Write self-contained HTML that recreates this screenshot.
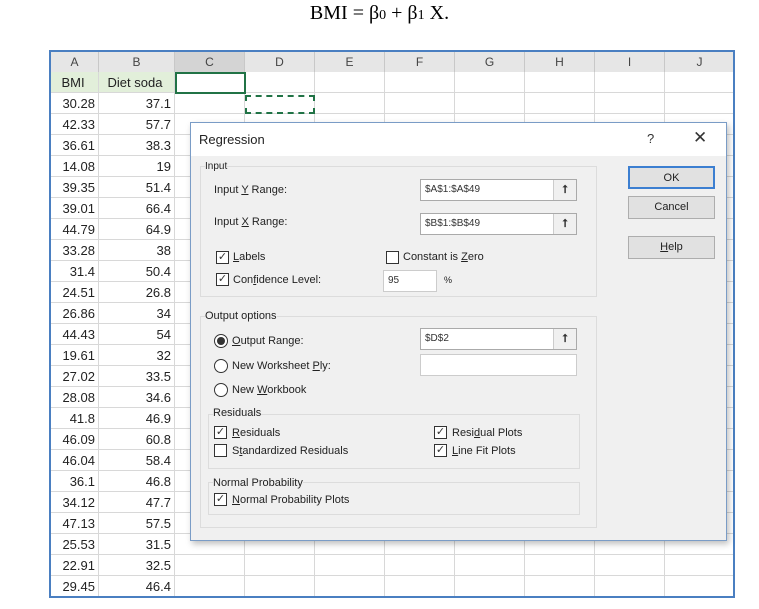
<!DOCTYPE html><html><head><style>
body{margin:0;width:759px;height:609px;background:#fff;position:relative;overflow:hidden;font-family:"Liberation Sans",sans-serif;}
.a{position:absolute;}
.t{font-size:12px;color:#222;}
.hd{position:absolute;top:52px;height:20px;background:#e6e6e6;border-right:1px solid #c8c8c8;font-size:12px;color:#444;text-align:center;line-height:20px;box-sizing:border-box}
.cell{position:absolute;height:21px;box-sizing:border-box;border-right:1px solid #d8d8d8;border-bottom:1px solid #d8d8d8;font-size:13px;text-align:right;padding-right:3px;line-height:21px;color:#222}
.cb{position:absolute;width:13px;height:13px;border:1px solid #333;background:#fff;box-sizing:border-box;font-size:11px;line-height:11px;text-align:center;color:#333}
.rb{position:absolute;width:14px;height:14px;border:1px solid #333;border-radius:50%;background:#fff;box-sizing:border-box}
.lb{position:absolute;font-size:11px;color:#222}
.inp{position:absolute;background:#fff;border:1px solid #aaa;box-sizing:border-box;font-size:10px;line-height:20px;padding-left:4px;color:#333}
.up{position:absolute;right:0;top:0;width:22px;height:100%;border-left:1px solid #ccc;background:#f0f0f0;text-align:center;font-size:11px;font-weight:bold;line-height:20px}
.btn{position:absolute;left:628px;width:87px;height:23px;border:1px solid #adadad;background:#e1e1e1;box-sizing:border-box;font-size:11px;text-align:center;line-height:20px;color:#222}
.grp{position:absolute;border:1px solid #dcdcdc;box-sizing:border-box}
</style></head><body>
<div class="a" style="left:0;width:759px;top:2px;text-align:center;font-family:'Liberation Serif',serif;font-size:20px;color:#000">BMI = β<span style="font-size:14px">0</span> + β<span style="font-size:14px">1</span> X.</div>
<div class="a" style="left:49px;top:50px;width:686px;height:548px;border:2px solid #4a7fc1;box-sizing:border-box;overflow:hidden;background:#fff">
<div id="g"></div>
</div>
<script>
var g=document.getElementById('g');var cols=[0,48,124,194,264,334,404,474,544,614,684];var names="ABCDEFGHIJ";
var h='';for(var i=0;i<10;i++){h+='<div class="hd" style="top:0;left:'+cols[i]+'px;width:'+(cols[i+1]-cols[i])+'px;'+(i==2?'background:#d4d4d4;':'')+'">'+names[i]+'</div>';}
var A=["30.28","42.33","36.61","14.08","39.35","39.01","44.79","33.28","31.4","24.51","26.86","44.43","19.61","27.02","28.08","41.8","46.09","46.04","36.1","34.12","47.13","25.53","22.91","29.45"];
var B=["37.1","57.7","38.3","19","51.4","66.4","64.9","38","50.4","26.8","34","54","32","33.5","34.6","46.9","60.8","58.4","46.8","47.7","57.5","31.5","32.5","46.4"];
for(var r=0;r<25;r++){var y=20+r*21;for(var i=0;i<10;i++){var t='',st='';if(i==0)t=r==0?'BMI':A[r-1];if(i==1)t=r==0?'Diet soda':B[r-1];if(r==0&&i<2)st='background:#e2efda;text-align:center;';h+='<div class="cell" style="top:'+y+'px;left:'+cols[i]+'px;width:'+(cols[i+1]-cols[i])+'px;'+st+'">'+t+'</div>';}}
h+='<div style="position:absolute;left:124px;top:20px;width:71px;height:22px;border:2px solid #217346;box-sizing:border-box"></div>';
h+='<div style="position:absolute;left:194px;top:43px;width:70px;height:19px;border:2px dashed #217346;box-sizing:border-box"></div>';
g.innerHTML=h;
</script>
<div class="a" style="left:190px;top:122px;width:537px;height:419px;background:#f0f0f0;border:1px solid #7a9cc6;box-sizing:border-box;box-shadow:2px 3px 6px rgba(0,0,0,.25)">
<div class="a" style="left:0;top:0;width:535px;height:33px;background:#fff"></div>
<div class="a" style="left:8px;top:9px;font-size:13px;color:#222">Regression</div>
<div class="a" style="left:456px;top:8px;font-size:13px;color:#333">?</div>
<div class="a" style="left:502px;top:5px;font-size:17px;color:#333">✕</div>
</div>
<div class="grp" style="left:200px;top:166px;width:397px;height:131px"></div>
<div class="lb" style="left:205px;top:161px;background:#f0f0f0;font-size:10px">Input</div>
<div class="lb" style="left:214px;top:184px">Input <u>Y</u> Range:</div>
<div class="lb" style="left:214px;top:216px">Input <u>X</u> Range:</div>
<div class="inp" style="left:420px;top:179px;width:157px;height:22px">$A$1:$A$49<div class="up">⭡</div></div>
<div class="inp" style="left:420px;top:213px;width:157px;height:22px">$B$1:$B$49<div class="up">⭡</div></div>
<div class="cb" style="left:216px;top:251px">✓</div><div class="lb" style="left:233px;top:251px"><u>L</u>abels</div>
<div class="cb" style="left:386px;top:251px"></div><div class="lb" style="left:403px;top:251px">Constant is <u>Z</u>ero</div>
<div class="cb" style="left:216px;top:273px">✓</div><div class="lb" style="left:233px;top:274px">Con<u>f</u>idence Level:</div>
<div class="inp" style="left:383px;top:270px;width:54px;height:22px;border-color:#ccc">95</div><div class="lb" style="left:444px;top:275px;font-size:9px">%</div>
<div class="btn" style="top:166px;border:2px solid #3c7fd1">OK</div>
<div class="btn" style="top:196px">Cancel</div>
<div class="btn" style="top:236px"><u>H</u>elp</div>
<div class="grp" style="left:200px;top:316px;width:397px;height:212px"></div>
<div class="lb" style="left:205px;top:310px;background:#f0f0f0">Output options</div>
<div class="rb" style="left:214px;top:334px"><div style="margin:2px;width:8px;height:8px;border-radius:50%;background:#333"></div></div><div class="lb" style="left:232px;top:335px"><u>O</u>utput Range:</div>
<div class="rb" style="left:214px;top:359px"></div><div class="lb" style="left:232px;top:360px">New Worksheet <u>P</u>ly:</div>
<div class="rb" style="left:214px;top:383px"></div><div class="lb" style="left:232px;top:384px">New <u>W</u>orkbook</div>
<div class="inp" style="left:420px;top:328px;width:157px;height:22px">$D$2<div class="up">⭡</div></div>
<div class="inp" style="left:420px;top:354px;width:157px;height:22px;border-color:#ccc"></div>
<div class="grp" style="left:208px;top:414px;width:372px;height:55px"></div>
<div class="lb" style="left:213px;top:407px;background:#f0f0f0">Residuals</div>
<div class="cb" style="left:214px;top:426px">✓</div><div class="lb" style="left:232px;top:427px"><u>R</u>esiduals</div>
<div class="cb" style="left:214px;top:444px"></div><div class="lb" style="left:232px;top:445px">S<u>t</u>andardized Residuals</div>
<div class="cb" style="left:434px;top:426px">✓</div><div class="lb" style="left:452px;top:427px">Resi<u>d</u>ual Plots</div>
<div class="cb" style="left:434px;top:444px">✓</div><div class="lb" style="left:452px;top:445px"><u>L</u>ine Fit Plots</div>
<div class="grp" style="left:208px;top:482px;width:372px;height:33px"></div>
<div class="lb" style="left:213px;top:477px;background:#f0f0f0">Normal Probability</div>
<div class="cb" style="left:214px;top:493px">✓</div><div class="lb" style="left:232px;top:494px"><u>N</u>ormal Probability Plots</div>
</body></html>
